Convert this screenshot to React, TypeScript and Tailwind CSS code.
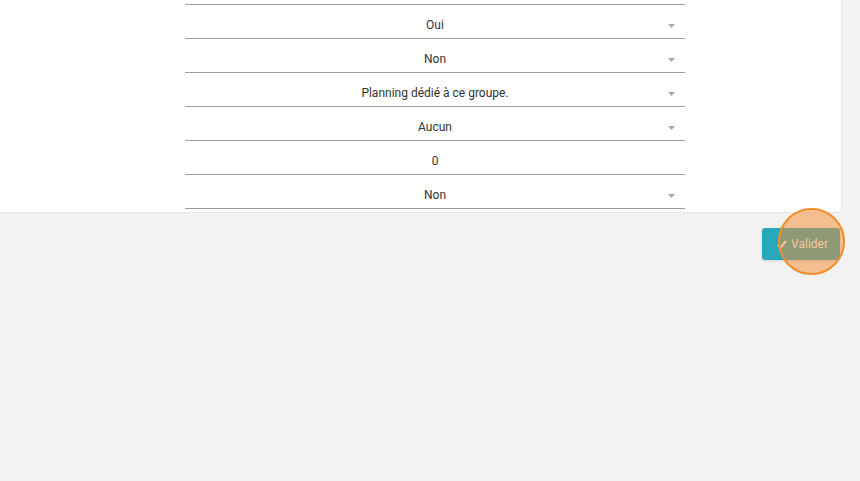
const rows: { label: string; select: boolean }[] = [
  { label: "Oui", select: true },
  { label: "Non", select: true },
  { label: "Planning dédié à ce groupe.", select: true },
  { label: "Aucun", select: true },
  { label: "0", select: false },
  { label: "Non", select: true },
];

const Caret = () => (
  <svg width="7" height="4" viewBox="0 0 7 4" className="absolute right-[10px] top-[19px]">
    <path d="M0 0 L7 0 L3.5 4 Z" fill="#a8a8a8" />
  </svg>
);

export default function App() {
  return (
    <div className="h-[481px] w-[860px] overflow-hidden bg-[#f2f2f2] font-['Roboto',sans-serif]">
      <div className="h-[213px] w-[842px] border-b border-r border-[#e6e6e6] bg-white">
        <div className="ml-[185px] w-[500px]">
          <div className="h-[5px] border-b border-[#9e9e9e]" />
          {rows.map((r, i) => (
            <div
              key={i}
              className="relative flex h-[34px] items-center justify-center border-b border-[#9e9e9e] pt-[6px] text-[12px] text-[#333]"
            >
              {r.label}
              {r.select && <Caret />}
            </div>
          ))}
        </div>
      </div>
      <div className="flex justify-end pr-[20px] pt-[15px]">
        <div className="relative">
          <button className="flex h-[32px] w-[78px] items-center justify-end gap-[4px] rounded-[3px] bg-[#26a9bd] pr-[12px] text-[12px] text-white shadow">
            <svg width="10" height="9" viewBox="0 0 10 9">
              <path d="M1 5 L3.5 7.5 L9 1" stroke="white" strokeWidth="2" fill="none" />
            </svg>
            Valider
          </button>
          <div className="pointer-events-none absolute left-[16px] top-[-20px] h-[67px] w-[67px] rounded-full border-2 border-[#f28c2a] bg-[rgba(245,140,45,0.5)]" />
        </div>
      </div>
    </div>
  );
}
